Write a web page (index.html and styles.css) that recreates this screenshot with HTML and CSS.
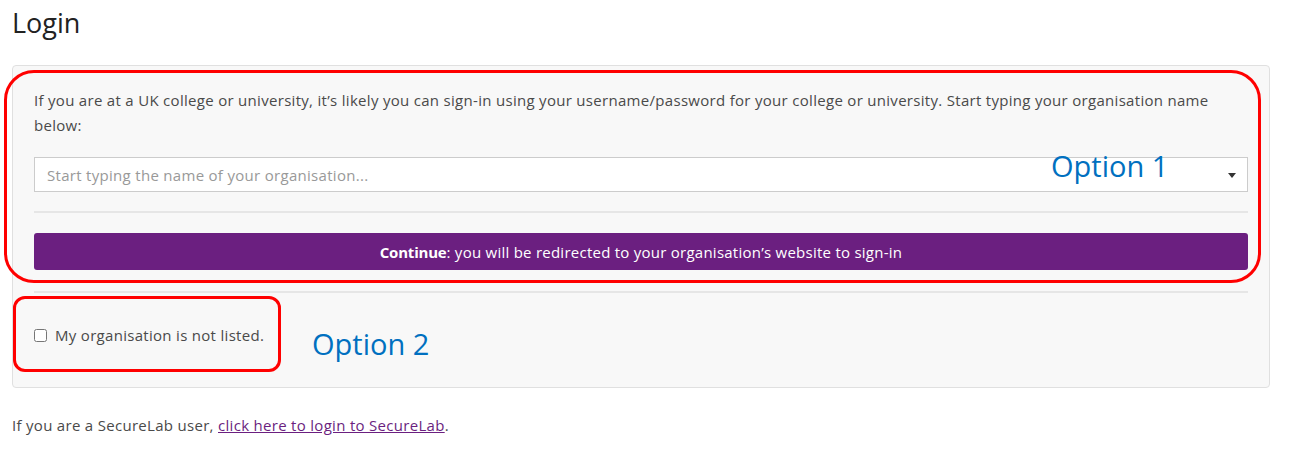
FILE: index.html
```html
<!DOCTYPE html>
<html lang="en">
<head>
<meta charset="utf-8">
<title>Login</title>
<link rel="stylesheet" href="styles.css">
</head>
<body>
<div class="page">
  <h1 class="title">Login</h1>
  <div class="panel">
    <p class="intro">If you are at a UK college or university, it’s likely you can sign-in using your username/password for your college or university. Start typing your organisation name below:</p>
    <div class="select">
      <span class="placeholder">Start typing the name of your organisation...</span>
      <span class="caret"></span>
    </div>
    <hr class="rule">
    <button class="continue" type="button"><strong>Continue</strong>: you will be redirected to your organisation’s website to sign-in</button>
    <hr class="rule rule-low">
    <label class="check"><input type="checkbox" class="box"><span>My organisation is not listed.</span></label>
  </div>
  <p class="footer">If you are a SecureLab user, <a href="#" class="link">click here to login to SecureLab</a>.</p>

  <div class="mark mark-1"></div>
  <div class="mark mark-2"></div>
  <div class="note note-1">Option 1</div>
  <div class="note note-2">Option 2</div>
</div>
</body>
</html>
```

FILE: styles.css
```css
* { box-sizing: border-box; }
html, body { margin: 0; padding: 0; background: #fff; }
body { font-family: "Open Sans", "Liberation Sans", sans-serif; color: #4a4a4a; }

.page {
  position: relative;
  width: 1289px;
  height: 456px;
  padding: 0 19px 0 12px;
}

.title {
  margin: 0;
  padding-top: 5px;
  font-size: 27px;
  font-weight: 400;
  line-height: 36px;
  color: #222;
}

.panel {
  margin-top: 24px;
  width: 1258px;
  background: #f8f8f8;
  border: 1px solid #e0e0e0;
  border-radius: 4px;
  padding: 22px 21px 0 21px;
  height: 323px;
}

.intro {
  margin: 0;
  font-size: 15px;
  letter-spacing: 0.3px;
  line-height: 25px;
  color: #4a4a4a;
}

.select {
  margin-top: 19px;
  height: 35px;
  background: #fff;
  border: 1px solid #ccc;
  display: flex;
  align-items: center;
  justify-content: space-between;
  padding: 0 11px 0 12px;
}
.placeholder { font-size: 15px; letter-spacing: 0.3px; color: #999; }
.caret {
  width: 0; height: 0;
  border-left: 4px solid transparent;
  border-right: 4px solid transparent;
  border-top: 5px solid #333;
  margin-top: 2px;
}

.rule {
  margin: 19px 0 0 0;
  border: 0;
  border-top: 2px solid #e6e6e6;
  height: 0;
}

.continue {
  display: block;
  width: 100%;
  margin-top: 20px;
  height: 37px;
  border: 0;
  border-radius: 3px;
  background: #6b1f80;
  color: #fff;
  font-family: "Open Sans", "Liberation Sans", sans-serif;
  font-size: 15px;
  letter-spacing: 0.25px;
  padding: 0;
}
.continue strong { font-weight: 700; letter-spacing: -0.2px; }

.rule-low { margin-top: 21px; }

.check {
  display: flex;
  align-items: center;
  margin-top: 32px;
  font-size: 15px;
  letter-spacing: 0.3px;
  color: #4a4a4a;
}
.box {
  margin: 0 8px 0 0;
  width: 13px;
  height: 13px;
}

.footer {
  margin: 27px 0 0 0;
  font-size: 15px;
  letter-spacing: 0.3px;
  color: #4a4a4a;
}
.link { color: #6b1f80; text-decoration: underline; }

.mark {
  position: absolute;
  border: 3px solid #f00;
  pointer-events: none;
}
.mark-1 { left: 4px; top: 70px; width: 1257px; height: 213px; border-radius: 30px; }
.mark-2 { left: 13px; top: 296px; width: 268px; height: 76px; border-radius: 12px; }

.note {
  position: absolute;
  font-family: "Open Sans", "Liberation Sans", sans-serif;
  font-size: 29px;
  line-height: 1;
  color: #0070c0;
}
.note-1 { left: 1051px; top: 151px; }
.note-2 { left: 312px; top: 329px; }
```
